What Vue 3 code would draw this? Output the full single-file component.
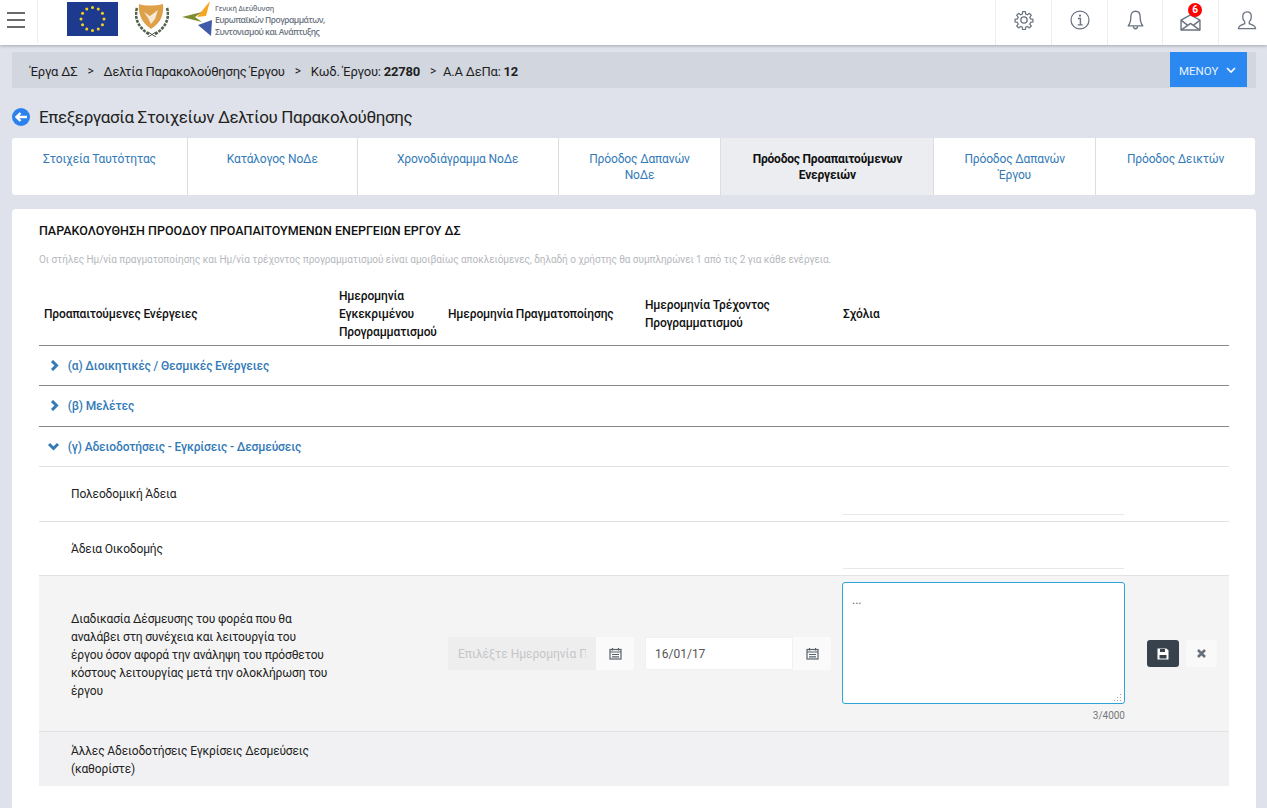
<template>
  <div class="page">
    <!-- top bar -->
    <header class="topbar">
      <div class="burger"><span></span><span></span><span></span></div>
      <div class="logos">
        <svg class="eu-flag" width="51" height="34" viewBox="0 0 51 34">
          <rect width="51" height="34" fill="#1d3a8f" />
          <circle v-for="s in euStars" :key="s.x" :cx="s.x" :cy="s.y" r="1.5" fill="#f7d21c" />
        </svg>
        <svg class="cy-logo" width="34" height="33" viewBox="0 0 34 33">
          <path d="M4 0 C9 2 20 2 28 0 C29 9 27 18 16 25 C6 18 3 9 4 0Z" fill="#dfa04a" />
          <path d="M9 8 L15 12 L23 6 L20 15 L16 20 L13 14Z" fill="#f6ead6" />
          <path d="M2 4 C-1 13 3 24 14 30 M32 4 C35 13 31 24 20 30" fill="none" stroke="#56634a" stroke-width="2.6" stroke-dasharray="3 1" />
          <path d="M13 28 L21 33 M21 28 L13 33" stroke="#555" stroke-width="1" />
        </svg>
        <svg class="gd-logo" width="31" height="36" viewBox="0 0 31 36">
          <path d="M28 0 L24 15 L15 16Z" fill="#f5a623" />
          <path d="M0 16 L20 11 L13 16 L20 21Z" fill="#7c8c2e" />
          <path d="M16 24 L30 19 L29 35Z" fill="#3f5aa8" />
        </svg>
        <div class="gd-text">
          <div class="gd-small">Γενική Διεύθυνση</div>
          <div>Ευρωπαϊκών Προγραμμάτων,</div>
          <div>Συντονισμού και Ανάπτυξης</div>
        </div>
      </div>
      <div class="top-icons">
        <div class="top-icon" style="width: 56px">
          <svg width="20" height="20" viewBox="0 0 24 24" fill="none" stroke="#6b7480" stroke-width="1.6" stroke-linejoin="round">
            <path d="M10.3 1.5h3.4l.5 3 2.1.9 2.5-1.8 2.4 2.4-1.8 2.5.9 2.1 3 .5v3.4l-3 .5-.9 2.1 1.8 2.5-2.4 2.4-2.5-1.8-2.1.9-.5 3h-3.4l-.5-3-2.1-.9-2.5 1.8-2.4-2.4 1.8-2.5-.9-2.1-3-.5v-3.4l3-.5.9-2.1-1.8-2.5 2.4-2.4 2.5 1.8 2.1-.9z" transform="translate(0.6 0.6) scale(0.95)" />
            <circle cx="12" cy="12" r="3.8" />
          </svg>
        </div>
        <div class="top-icon" style="width: 56px">
          <svg width="20" height="20" viewBox="0 0 24 24" fill="none" stroke="#6b7480" stroke-width="1.5">
            <circle cx="12" cy="12" r="10.8" />
            <circle cx="12" cy="6.8" r="1.3" fill="#6b7480" stroke="none" />
            <path d="M9.5 10.2h3v7.4M9.2 17.8h6" stroke-width="1.7" />
          </svg>
        </div>
        <div class="top-icon" style="width: 55px">
          <svg width="17" height="20" viewBox="0 0 20 24" fill="none" stroke="#6b7480" stroke-width="1.6" stroke-linejoin="round">
            <path d="M10 1.5c3.8 0 5.6 3 5.6 6.5 0 5 1 8.5 3.2 11H1.2c2.2-2.5 3.2-6 3.2-11 0-3.5 1.8-6.5 5.6-6.5z" />
            <path d="M7.5 19.5c0 2 1.2 3 2.5 3s2.5-1 2.5-3" />
          </svg>
        </div>
        <div class="top-icon" style="width: 56px">
          <svg width="21" height="17" viewBox="0 0 22 18" fill="none" stroke="#6b7480" stroke-width="1.5" stroke-linejoin="round" class="mail">
            <path d="M1 6.5 11 1l10 5.5V17H1z" />
            <path d="M1 6.5l7 5.5M21 6.5l-7 5.5M1 17l10-7 10 7" />
          </svg>
          <span class="mail-badge">6</span>
        </div>
        <div class="top-icon user" style="width: 49px">
          <svg width="20" height="19" viewBox="0 0 22 22" fill="none" stroke="#6b7480" stroke-width="1.5" stroke-linejoin="round">
            <path d="M11 1c3.2 0 5 2.4 5 5.6 0 2.6-1 4.8-2.4 6v2.2c3 1 7 2 7.4 5.7H1c.4-3.7 4.4-4.7 7.4-5.7v-2.2C7 11.4 6 9.2 6 6.6 6 3.4 7.8 1 11 1z" />
          </svg>
        </div>
      </div>
    </header>

    <!-- breadcrumb -->
    <div class="crumbs">
      <div class="crumb-text">
        <span>Έργα ΔΣ</span>
        <span class="sep">&gt;</span>
        <span>Δελτία Παρακολούθησης Έργου</span>
        <span class="sep">&gt;</span>
        <span>Κωδ. Έργου: <b>22780</b></span>
        <span class="sep sep-last">&gt;</span>
        <span>Α.Α ΔεΠα: <b>12</b></span>
      </div>
      <button class="menu-btn">
        ΜΕΝΟΥ
        <svg width="10" height="7" viewBox="0 0 10 7" fill="none" stroke="#fff" stroke-width="1.6"><path d="M1 1l4 4 4-4" /></svg>
      </button>
    </div>

    <!-- title -->
    <div class="title-row">
      <span class="back-ico">
        <svg width="12" height="10" viewBox="0 0 12 10" fill="none" stroke="#fff" stroke-width="2.4"><path d="M5.5 1 1.5 5l4 4M2 5h10" /></svg>
      </span>
      <h1>Επεξεργασία Στοιχείων Δελτίου Παρακολούθησης</h1>
    </div>

    <!-- tabs -->
    <div class="tabs">
      <div
        v-for="t in tabs"
        :key="t.label"
        :class="['tab', { active: t.active }]"
        :style="{ width: t.width + 'px' }"
      >{{ t.label }}</div>
    </div>

    <!-- main card -->
    <section class="card">
      <h2>ΠΑΡΑΚΟΛΟΥΘΗΣΗ ΠΡΟΟΔΟΥ ΠΡΟΑΠΑΙΤΟΥΜΕΝΩΝ ΕΝΕΡΓΕΙΩΝ ΕΡΓΟΥ ΔΣ</h2>
      <p class="hint">Οι στήλες Ημ/νία πραγματοποίησης και Ημ/νία τρέχοντος προγραμματισμού είναι αμοιβαίως αποκλειόμενες, δηλαδή ο χρήστης θα συμπληρώνει 1 από τις 2 για κάθε ενέργεια.</p>

      <table class="grid">
        <colgroup>
          <col style="width: 300px" />
          <col style="width: 109px" />
          <col style="width: 197px" />
          <col style="width: 197px" />
          <col style="width: 295px" />
          <col />
        </colgroup>
        <thead>
          <tr>
            <th class="first-th">Προαπαιτούμενες Ενέργειες</th>
            <th>Ημερομηνία Εγκεκριμένου Προγραμματισμού</th>
            <th>Ημερομηνία Πραγματοποίησης</th>
            <th>Ημερομηνία Τρέχοντος<br />Προγραμματισμού</th>
            <th class="comment-th">Σχόλια</th>
            <th></th>
          </tr>
        </thead>
        <tbody>
          <tr class="group">
            <td colspan="6">
              <svg class="chev" width="9" height="11" viewBox="0 0 9 11" fill="none" stroke="#337ab7" stroke-width="3"><path d="M2 1l4.5 4.5L2 10" /></svg>
              (α) Διοικητικές / Θεσμικές Ενέργειες
            </td>
          </tr>
          <tr class="group second">
            <td colspan="6">
              <svg class="chev" width="9" height="11" viewBox="0 0 9 11" fill="none" stroke="#337ab7" stroke-width="3"><path d="M2 1l4.5 4.5L2 10" /></svg>
              (β) Μελέτες
            </td>
          </tr>
          <tr class="group open">
            <td colspan="6">
              <svg class="chev-down" width="11" height="9" viewBox="0 0 11 9" fill="none" stroke="#337ab7" stroke-width="3"><path d="M1 2l4.5 4.5L10 2" /></svg>
              (γ) Αδειοδοτήσεις - Εγκρίσεις - Δεσμεύσεις
            </td>
          </tr>
          <tr class="item first-item">
            <td class="name">Πολεοδομική Άδεια</td>
            <td></td><td></td><td></td>
            <td class="comment-cell"><div class="underline"></div></td>
            <td></td>
          </tr>
          <tr class="item">
            <td class="name">Άδεια Οικοδομής</td>
            <td></td><td></td><td></td>
            <td class="comment-cell"><div class="underline"></div></td>
            <td></td>
          </tr>
          <tr class="item editing">
            <td class="name long">Διαδικασία Δέσμευσης του φορέα που θα αναλάβει στη συνέχεια και λειτουργία του έργου όσον αφορά την ανάληψη του πρόσθετου κόστους λειτουργίας μετά την ολοκλήρωση του έργου</td>
            <td colspan="2" class="date-cell">
              <div class="date-group disabled">
                <input type="text" disabled placeholder="Επιλέξτε Ημερομηνία Πραγματοποίησης" />
                <span class="cal-btn"><svg width="13" height="13" viewBox="0 0 13 13" fill="none" stroke="#59626c" stroke-width="1.2"><rect x="1" y="2.5" width="11" height="9.5" /><path d="M1 5h11M3.5 1v2.5M9.5 1v2.5M3 7.5h7M3 9.8h7" /></svg></span>
              </div>
            </td>
            <td class="date-cell">
              <div class="date-group">
                <input type="text" value="16/01/17" />
                <span class="cal-btn"><svg width="13" height="13" viewBox="0 0 13 13" fill="none" stroke="#59626c" stroke-width="1.2"><rect x="1" y="2.5" width="11" height="9.5" /><path d="M1 5h11M3.5 1v2.5M9.5 1v2.5M3 7.5h7M3 9.8h7" /></svg></span>
              </div>
            </td>
            <td class="comment-cell edit">
              <div class="area-wrap">
                <textarea>...</textarea>
                <svg class="grip" width="8" height="8" viewBox="0 0 8 8" fill="#9aa0a6">
                  <rect x="6" y="0" width="1" height="1" />
                  <rect x="3" y="3" width="1" height="1" />
                  <rect x="6" y="3" width="1" height="1" />
                  <rect x="0" y="6" width="1" height="1" />
                  <rect x="3" y="6" width="1" height="1" />
                  <rect x="6" y="6" width="1" height="1" />
                </svg>
              </div>
              <div class="counter">3/4000</div>
            </td>
            <td class="actions">
              <button class="btn-save">
                <svg width="12" height="12" viewBox="0 0 12 12"><path d="M0.5 0.5h9l2 2v9h-11z" fill="#fff" /><rect x="3" y="1" width="5" height="3" fill="#37424d" /><rect x="2.5" y="7" width="7" height="3.5" fill="#37424d" /></svg>
              </button>
              <button class="btn-cancel">
                <svg width="9" height="9" viewBox="0 0 9 9" stroke="#66707a" stroke-width="2.6"><path d="M1 1l7 7M8 1l-7 7" /></svg>
              </button>
            </td>
          </tr>
          <tr class="item last">
            <td class="name">Άλλες Αδειοδοτήσεις Εγκρίσεις Δεσμεύσεις (καθορίστε)</td>
            <td colspan="5"></td>
          </tr>
        </tbody>
      </table>
    </section>
  </div>
</template>

<script setup>
const euStars = Array.from({ length: 12 }, (_, i) => ({
  x: 25.5 + 11.5 * Math.sin((i * Math.PI) / 6),
  y: 17 - 11.5 * Math.cos((i * Math.PI) / 6)
}))

const tabs = [
  { label: 'Στοιχεία Ταυτότητας', width: 176 },
  { label: 'Κατάλογος ΝοΔε', width: 170 },
  { label: 'Χρονοδιάγραμμα ΝοΔε', width: 201 },
  { label: 'Πρόοδος Δαπανών ΝοΔε', width: 163 },
  { label: 'Πρόοδος Προαπαιτούμενων Ενεργειών', width: 213, active: true },
  { label: 'Πρόοδος Δαπανών Έργου', width: 162 },
  { label: 'Πρόοδος Δεικτών', width: 159 }
]
</script>

<style>
html, body {
  margin: 0;
  background: #dfe2ea;
}
</style>

<style scoped>
.page {
  height: 808px;
  overflow: hidden;
  font-family: Roboto, "Liberation Sans", sans-serif;
  font-size: 12px;
  letter-spacing: -0.15px;
  color: #111;
  background: #dfe2ea;
}

/* top bar */
.topbar {
  height: 45px;
  display: flex;
  align-items: center;
  background: #fff;
  box-shadow: 0 1px 3px rgba(0, 0, 0, 0.25);
}

.burger {
  width: 38px;
  height: 43px;
  box-sizing: border-box;
  padding: 12px 0 0 7px;
  border-right: 1px solid #eee;
  align-self: flex-start;
}

.burger span {
  display: block;
  width: 18px;
  height: 2px;
  margin-bottom: 5px;
  background: #6a6a6a;
}

.logos {
  display: flex;
  align-items: flex-start;
  align-self: flex-start;
  margin-left: 29px;
}

.eu-flag {
  margin: 2px 17px 0 0;
}

.cy-logo {
  margin: 4px 13px 0 0;
}

.gd-logo {
  margin: 1px 2px 0 0;
}

.gd-text {
  padding-top: 4px;
  font-family: "Open Sans", sans-serif;
  font-size: 8.5px;
  line-height: 12px;
  font-weight: 600;
  color: #6b7480;
  letter-spacing: -0.5px;
}

.gd-small {
  font-size: 7px;
  line-height: 10px;
  letter-spacing: -0.1px;
}

.top-icons {
  display: flex;
  margin-left: auto;
  height: 45px;
}

.top-icon {
  position: relative;
  box-sizing: border-box;
  display: flex;
  align-items: center;
  justify-content: center;
  border-left: 1px solid #eee;
  padding-bottom: 5px;
}

.top-icon.user {
  padding-left: 8px;
}

.mail {
  margin-top: 4px;
}

.mail-badge {
  position: absolute;
  top: 3px;
  left: 25px;
  width: 14px;
  height: 14px;
  border-radius: 50%;
  background: #f00;
  color: #fff;
  font-size: 10px;
  font-weight: 700;
  line-height: 14px;
  text-align: center;
}

/* breadcrumb */
.crumbs {
  display: flex;
  align-items: flex-start;
  justify-content: space-between;
  height: 36px;
  margin: 7px 11px 0 12px;
  padding: 0 9px 0 18px;
  background: #d2d6df;
}

.crumb-text {
  display: flex;
  align-items: center;
  height: 38px;
  font-size: 13px;
  letter-spacing: -0.22px;
  color: #1e1e1e;
}

.sep {
  margin: 0 10px;
  font-size: 12px;
}

.sep-last {
  margin-right: 7px;
}

.menu-btn {
  display: flex;
  align-items: center;
  gap: 8px;
  width: 77px;
  height: 35px;
  padding: 2px 0 0 9px;
  border: none;
  background: #2b88f0;
  color: #e8f2ff;
  font-family: inherit;
  font-size: 11.5px;
}

/* title */
.title-row {
  display: flex;
  align-items: center;
  gap: 9px;
  margin: 18px 0 0 12px;
  height: 22px;
}

.back-ico {
  display: flex;
  align-items: center;
  justify-content: center;
  width: 18px;
  height: 18px;
  border-radius: 50%;
  background: #2b82ee;
}

h1 {
  margin: 0;
  font-size: 17px;
  font-weight: 400;
  letter-spacing: -0.37px;
  color: #222;
}

/* tabs */
.tabs {
  display: flex;
  height: 57px;
  margin: 10px 12px 0;
  background: #fff;
  border-radius: 3px;
  overflow: hidden;
}

.tab {
  box-sizing: border-box;
  padding: 13px 24px 0;
  border-right: 1px solid #ddd;
  color: #337ab7;
  font-size: 12px;
  line-height: 16px;
  text-align: center;
}

.tab:last-child {
  border-right: none;
}

.tab.active {
  background: #ecedf0;
  color: #111;
  font-weight: 700;
  padding: 13px 16px 0;
  letter-spacing: -0.2px;
}

/* card */
.card {
  margin: 14px 11px 0 12px;
  height: 640px;
  padding: 14px 27px 0;
  background: #fff;
  border-radius: 4px;
}

h2 {
  margin: 0;
  font-size: 12.5px;
  line-height: 16px;
  font-weight: 500;
  letter-spacing: 0;
  color: #111;
}

.hint {
  margin: 14px 0 0;
  font-size: 10px;
  line-height: 14px;
  letter-spacing: -0.05px;
  color: #b5b8bd;
}

/* table */
.grid {
  width: 1190px;
  margin-top: 17px;
  border-collapse: separate;
  border-spacing: 0;
  table-layout: fixed;
}

th,
td {
  box-sizing: border-box;
}

th {
  height: 62px;
  padding: 0 0 2px;
  border-bottom: 1px solid #888;
  text-align: left;
  font-size: 12px;
  line-height: 18px;
  font-weight: 500;
  color: #111;
}

.first-th {
  padding-left: 5px;
}

.comment-th {
  padding-left: 1px;
}

.group td {
  height: 40px;
  padding: 0 0 0 11px;
  border-bottom: 1px solid #888;
  color: #337ab7;
  font-size: 12px;
  font-weight: 500;
}

.group.second td {
  height: 41px;
}

.group.open td {
  padding-left: 9px;
  border-bottom: 1px solid #e2e2e2;
}

.chev {
  margin-right: 6px;
  vertical-align: -1px;
}

.chev-down {
  margin-right: 6px;
  vertical-align: 0;
}

.item td {
  height: 54px;
  padding: 0;
  border-bottom: 1px solid #e2e2e2;
}

.first-item td {
  height: 55px;
}

.item .name {
  padding: 0 10px 0 32px;
  font-size: 12px;
  line-height: 18px;
  color: #222;
}

.item.editing .name,
.item.last .name {
  padding-top: 2px;
}

.comment-cell {
  vertical-align: bottom;
}

.underline {
  width: 281px;
  margin: 0 0 6px 1px;
  border-bottom: 1px solid #e8e8e8;
}

.item.editing td {
  height: 156px;
  background: #f4f4f4;
}

.item.last td {
  height: 54px;
  background: #f1f1f3;
  border-bottom: none;
}

.date-cell {
  vertical-align: middle;
}

.item.editing td.date-cell:nth-child(2) {
  padding-left: 109px;
}

.date-group {
  display: flex;
  width: 186px;
  height: 33px;
}

.date-group input {
  box-sizing: border-box;
  width: 148px;
  height: 33px;
  padding: 0 9px;
  border: 1px solid #f1f1f1;
  border-radius: 2px 0 0 2px;
  background: #fff;
  color: #555;
  font-family: inherit;
  font-size: 12px;
  outline: none;
}

.disabled input {
  background: #eee;
  border-color: #eee;
}

.disabled input::placeholder {
  color: #c4c6c9;
}

.cal-btn {
  display: flex;
  align-items: center;
  justify-content: center;
  width: 38px;
  background: #fafafa;
  border-radius: 0 3px 3px 0;
}

.item.editing td.comment-cell.edit {
  vertical-align: top;
  padding-top: 6px;
}

.area-wrap {
  position: relative;
  width: 283px;
}

textarea {
  display: block;
  box-sizing: border-box;
  width: 283px;
  height: 122px;
  padding: 10px 9px;
  border: 1px solid #2ca6d8;
  border-radius: 3px;
  background: #fff;
  color: #666;
  font-family: inherit;
  font-size: 12px;
  outline: none;
  resize: none;
}

.grip {
  position: absolute;
  right: 3px;
  bottom: 2px;
}

.counter {
  width: 283px;
  margin-top: 6px;
  text-align: right;
  font-size: 10px;
  letter-spacing: 0;
  color: #777;
}

.actions {
  vertical-align: middle;
}

.item.editing td.actions {
  padding-left: 10px;
  white-space: nowrap;
}

.actions button {
  display: inline-flex;
  align-items: center;
  justify-content: center;
  height: 27px;
  padding: 0;
  border: none;
  border-radius: 3px;
  vertical-align: middle;
}

.btn-save {
  width: 32px;
  margin-right: 7px;
  background: #37424d;
}

.btn-cancel {
  width: 31px;
  background: #f9f9f9;
}
</style>
